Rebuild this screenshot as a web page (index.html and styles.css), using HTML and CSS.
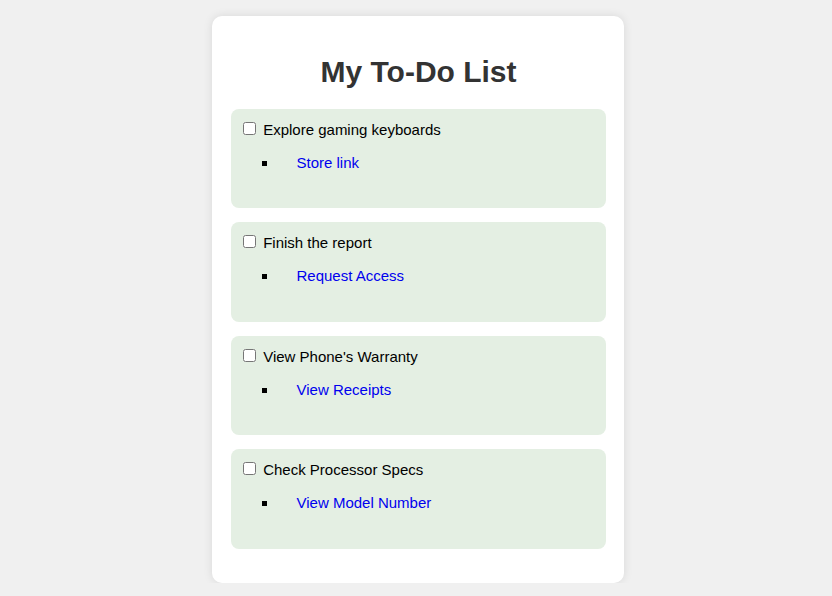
FILE: index.html
```html
<!DOCTYPE html>
<html lang="en">
<head>
<meta charset="utf-8">
<title>My To-Do List</title>
<link rel="stylesheet" href="styles.css">
</head>
<body>
<div class="card">
  <h1 class="title">My To-Do List</h1>
  <div class="task">
    <label class="task-label"><input type="checkbox"> Explore gaming keyboards</label>
    <ul class="links"><li><a href="#">Store link</a></li></ul>
  </div>
  <div class="task">
    <label class="task-label"><input type="checkbox"> Finish the report</label>
    <ul class="links"><li><a href="#">Request Access</a></li></ul>
  </div>
  <div class="task">
    <label class="task-label"><input type="checkbox"> View Phone's Warranty</label>
    <ul class="links"><li><a href="#">View Receipts</a></li></ul>
  </div>
  <div class="task">
    <label class="task-label"><input type="checkbox"> Check Processor Specs</label>
    <ul class="links"><li><a href="#">View Model Number</a></li></ul>
  </div>
</div>
</body>
</html>
```
FILE: styles.css
```css
html, body {
  margin: 0;
  padding: 0;
}
body {
  background: #f0f0f0;
  font-family: "Liberation Sans", Arial, sans-serif;
  display: flex;
  justify-content: center;
  padding-top: 16px;
  padding-left: 4px;
}
.card {
  width: 412px;
  box-sizing: border-box;
  background: #ffffff;
  border-radius: 10px;
  box-shadow: 0 0 10px rgba(0, 0, 0, 0.1);
  padding: 19px 18px 20px 19px;
}
.title {
  font-size: 30px;
  font-weight: bold;
  color: #333333;
  text-align: center;
  margin: 20px 0;
}
.task {
  background: #e4efe3;
  border-radius: 8px;
  padding: 10px 10px 10px 8px;
  margin-bottom: 14.3px;
  font-size: 15px;
  color: #000;
}
.task-label {
  display: block;
}
.links {
  list-style-type: square;
  margin: 16px 0 27.2px;
  padding-left: 39px;
}
.links a {
  color: #0000ee;
  text-decoration: none;
  margin-left: 18.5px;
}
```
